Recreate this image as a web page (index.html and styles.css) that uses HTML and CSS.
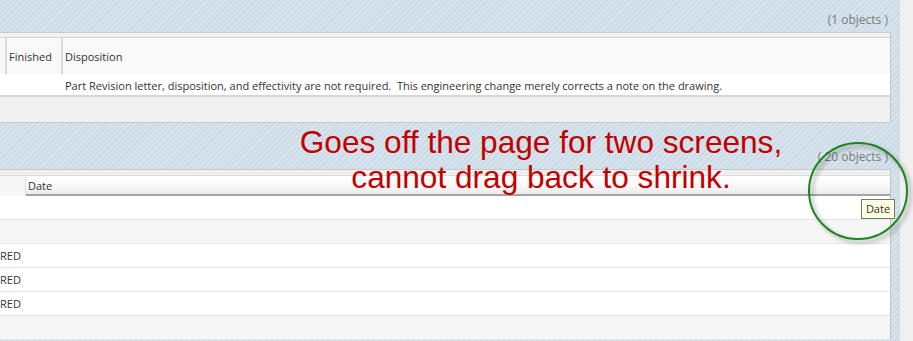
FILE: index.html
```html
<!DOCTYPE html>
<html lang="en">
<head>
  <meta charset="UTF-8">
  <title>Change Items</title>
  <link rel="stylesheet" href="styles.css">
</head>
<body>
  <div class="screen">
    <div class="main">
      <!-- Disposition panel -->
      <div class="toolbar toolbar-short">
        <span class="count">(1 objects )</span>
      </div>
      <div class="grid">
        <div class="grid-gap"></div>
        <div class="head head-tall">
          <div class="col col-stub"></div>
          <div class="col col-finished">Finished</div>
          <div class="col col-disp">Disposition</div>
        </div>
        <div class="row row-single">
          <div class="cell cell-finished"></div>
          <div class="cell cell-disp">Part Revision letter, disposition, and effectivity are not required.&nbsp; This engineering change merely corrects a note on the drawing.</div>
        </div>
        <div class="grid-footer"></div>
      </div>

      <!-- Affected items panel -->
      <div class="toolbar toolbar-tall">
        <span class="count">( 20 objects )</span>
      </div>
      <div class="grid grid-open">
        <div class="grid-gap grid-gap-wide"></div>
        <div class="head head-short">
          <div class="col col-left"></div>
          <div class="col col-date">Date</div>
        </div>
        <div class="row"><div class="cell"></div></div>
        <div class="row alt"><div class="cell"></div></div>
        <div class="row"><div class="cell">RED</div></div>
        <div class="row"><div class="cell">RED</div></div>
        <div class="row"><div class="cell">RED</div></div>
        <div class="row alt"><div class="cell"></div></div>
      </div>

      <div class="note">Goes off the page for two screens,<br>cannot drag back to shrink.</div>

      <svg class="ring" width="110" height="108" viewBox="0 0 110 108">
        <ellipse cx="52" cy="51" rx="49" ry="48" fill="none" stroke="#1c861c" stroke-width="2"/>
      </svg>

      <div class="tooltip">Date</div>
    </div>
    <div class="scroll"></div>
  </div>
</body>
</html>
```

FILE: styles.css
```css
body {
  margin: 0;
  font-family: "Open Sans", "Noto Sans", sans-serif;
  font-size: 11px;
  color: #333;
  overflow: hidden;
}
.screen {
  display: flex;
  width: 913px;
  height: 341px;
}
.main {
  position: relative;
  width: 900px;
  background: repeating-linear-gradient(135deg, #cddbe6 0 2px, #d8e4ed 2px 4px);
}
.scroll {
  flex: 1;
  background-color: #f0f0f0;
}
.toolbar {
  width: 891px;
  display: flex;
  justify-content: flex-end;
  align-items: flex-end;
  box-sizing: border-box;
  padding: 0 3px 4px 0;
}
.toolbar-short {
  height: 32px;
}
.toolbar-tall {
  height: 46px;
}
.count {
  color: #7a7a7a;
  font-size: 12px;
  line-height: 16px;
}
.grid {
  width: 891px;
  box-sizing: border-box;
  border-top: 1px solid #c8c8c8;
  border-right: 1px solid #c4c4c4;
  border-bottom: 1px solid #c8c8c8;
  background-color: #fff;
}
.grid-open {
  border-bottom: none;
}
.grid-gap {
  height: 4px;
  background-color: #f0f0f0;
}
.grid-gap-wide {
  height: 5px;
}
.head {
  display: flex;
  border-top: 1px solid #d2d2d2;
}
.head-tall {
  height: 36px;
  background-color: #f9f9f9;
}
.col {
  box-sizing: border-box;
  padding-left: 2px;
  display: flex;
  align-items: center;
  border-right: 2px solid #dadada;
}
.col-stub {
  width: 7px;
}
.col-finished {
  width: 56px;
}
.col-disp {
  flex: 1;
  border-right: none;
}
.head-short {
  height: 20px;
  border-top-color: #dcdcdc;
}
.col-left {
  width: 26px;
  background-color: #f6f6f6;
  border-right: 1px solid #dedede;
}
.col-date {
  flex: 1;
  padding-top: 1px;
  background: linear-gradient(#ffffff, #f9f9f9 55%, #ebebeb);
  border-right: none;
  border-bottom: 2px solid #a4a4a4;
}
.row {
  display: flex;
  height: 23px;
  border-bottom: 1px solid #e6e6e6;
  background-color: #fff;
}
.row.alt {
  background-color: #f6f6f6;
}
.row-single {
  height: 21px;
  border-bottom: 2px solid #d6d6d6;
}
.cell {
  display: flex;
  align-items: center;
}
.cell-finished {
  width: 63px;
}
.cell-disp {
  padding-left: 2px;
  padding-top: 1px;
}
.grid-footer {
  height: 25px;
  background-color: #f0f0f0;
}
.note {
  position: absolute;
  left: 290px;
  top: 125px;
  width: 502px;
  text-align: center;
  font-family: "Liberation Sans", Arial, sans-serif;
  font-size: 31.6px;
  line-height: 35px;
  color: #c20000;
}
.ring {
  position: absolute;
  left: 806px;
  top: 140px;
  filter: drop-shadow(3px 3px 2px rgba(0, 0, 0, 0.35));
}
.tooltip {
  position: absolute;
  left: 861px;
  top: 199px;
  width: 34px;
  height: 20px;
  box-sizing: border-box;
  border: 1px solid #767676;
  background-color: #ffffe1;
  font-size: 11px;
  line-height: 18px;
  text-align: center;
  color: #333;
}
```
